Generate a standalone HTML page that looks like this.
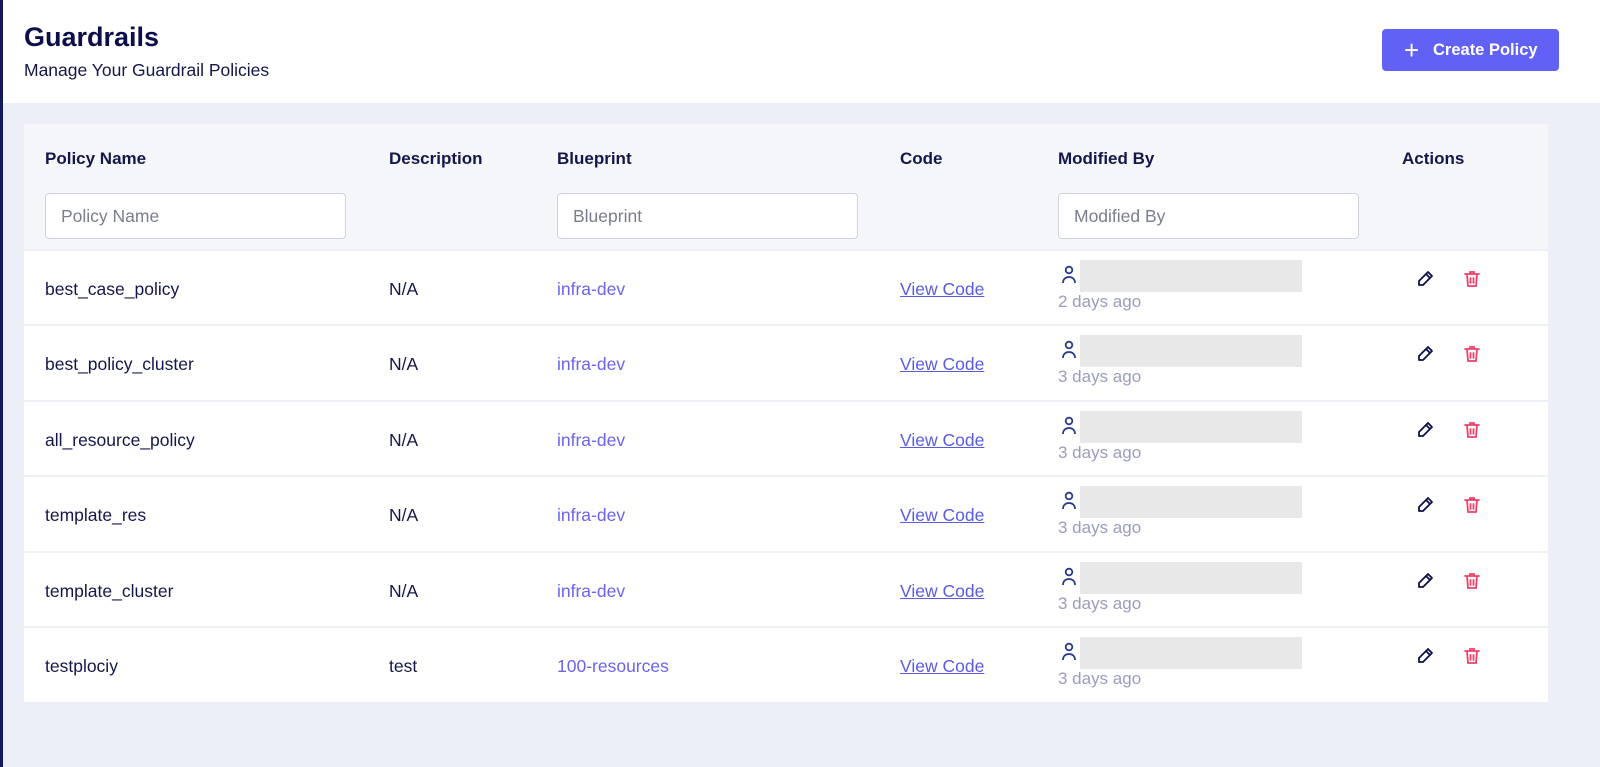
<!DOCTYPE html>
<html><head><style>
*{margin:0;padding:0;box-sizing:border-box}
body{width:1600px;height:767px;background:#eceff7;font-family:"Liberation Sans",sans-serif;position:relative;overflow:hidden;color:#0f1140}
.a{position:absolute}
.lb{left:0;top:0;width:3px;height:767px;background:#15195a}
.hdr{left:3px;top:0;width:1597px;height:103px;background:#fff}
h1{position:absolute;left:24px;top:22px;font-size:27px;font-weight:bold;color:#0d0f4a}
.sub{left:24px;top:60px;font-size:17.5px;color:#14174a}
.btn{left:1382px;top:29px;width:177px;height:42px;background:#6161f5;border-radius:4px;color:#fff;font-weight:bold;font-size:16.5px;line-height:42px;padding-left:51px}
.btn span{position:absolute;left:22px;top:0;font-size:26px;font-weight:normal}
.tbl{left:24px;top:124px;width:1524px;height:578px;background:#fff}
.th{left:24px;top:124px;width:1524px;height:126px;background:#f5f6fa}
.hd{top:149px;font-size:17px;font-weight:bold;color:#14174a}
.inp{top:193px;width:301px;height:46px;border:1.5px solid #cfd3dc;border-radius:4px;background:#fff;font-size:17.5px;color:#7a7d8e;padding:12px 15px}
.line{left:24px;width:1524px;height:2px;background:#eef0f6}
.c{font-size:17.5px;color:#14174a}
.bp{color:#6a63f0}
.vc{color:#5a5ce0;text-decoration:underline}
.gray{width:222px;height:32px;background:#e8e8e8}
.ago{font-size:17px;color:#9a9cc0}
</style></head><body>
<div class="a lb"></div>
<div class="a hdr"></div>
<h1>Guardrails</h1>
<div class="a sub">Manage Your Guardrail Policies</div>
<div class="a btn"><span>+</span>Create Policy</div>
<div class="a tbl"></div>
<div class="a th"></div>
<div class="a hd" style="left:45px">Policy Name</div>
<div class="a hd" style="left:389px">Description</div>
<div class="a hd" style="left:557px">Blueprint</div>
<div class="a hd" style="left:900px">Code</div>
<div class="a hd" style="left:1058px">Modified By</div>
<div class="a hd" style="left:1402px">Actions</div>
<div class="a inp" style="left:45px">Policy Name</div>
<div class="a inp" style="left:557px">Blueprint</div>
<div class="a inp" style="left:1058px">Modified By</div>
<div id="rows"></div>
<script>
var d=[["best_case_policy","N/A","infra-dev","2"],["best_policy_cluster","N/A","infra-dev","3"],["all_resource_policy","N/A","infra-dev","3"],["template_res","N/A","infra-dev","3"],["template_cluster","N/A","infra-dev","3"],["testplociy","test","100-resources","3"]];
var h="";
d.forEach(function(r,i){var y=250+i*75.4;
h+='<div class="a line" style="top:'+(y-1)+'px"></div>';
var t=y+29;
h+='<div class="a c" style="left:45px;top:'+t+'px">'+r[0]+'</div>';
h+='<div class="a c" style="left:389px;top:'+t+'px">'+r[1]+'</div>';
h+='<div class="a c bp" style="left:557px;top:'+t+'px">'+r[2]+'</div>';
h+='<div class="a c vc" style="left:900px;top:'+t+'px">View Code</div>';
h+='<svg class="a" style="left:1060px;top:'+(y+14)+'px" width="18" height="22" viewBox="0 0 18 22" fill="none" stroke="#2a3a8a" stroke-width="1.8"><circle cx="9" cy="6" r="3.3"/><path d="M3 19c0-4 2.7-6 6-6s6 2 6 6"/></svg>';
h+='<div class="a gray" style="left:1080px;top:'+(y+10)+'px"></div>';
h+='<div class="a ago" style="left:1058px;top:'+(y+42)+'px">'+r[3]+' days ago</div>';
h+='<svg class="a" style="left:1415px;top:'+(y+19)+'px" width="20" height="20" viewBox="0 0 20 20" fill="none" stroke="#0d0f4a" stroke-width="1.8" stroke-linejoin="round"><path d="M13 3l4 4-9 9H4v-4z"/><path d="M11 5l4 4"/></svg>';
h+='<svg class="a" style="left:1462px;top:'+(y+19)+'px" width="20" height="20" viewBox="0 0 20 20" fill="none" stroke="#f0416a" stroke-width="1.8" stroke-linecap="round"><path d="M3 5h14M8 5V3h4v2M5 5l1 12h8l1-12M8.5 9v5M11.5 9v5"/></svg>';
});
document.getElementById("rows").innerHTML=h;
</script>
</body></html>
